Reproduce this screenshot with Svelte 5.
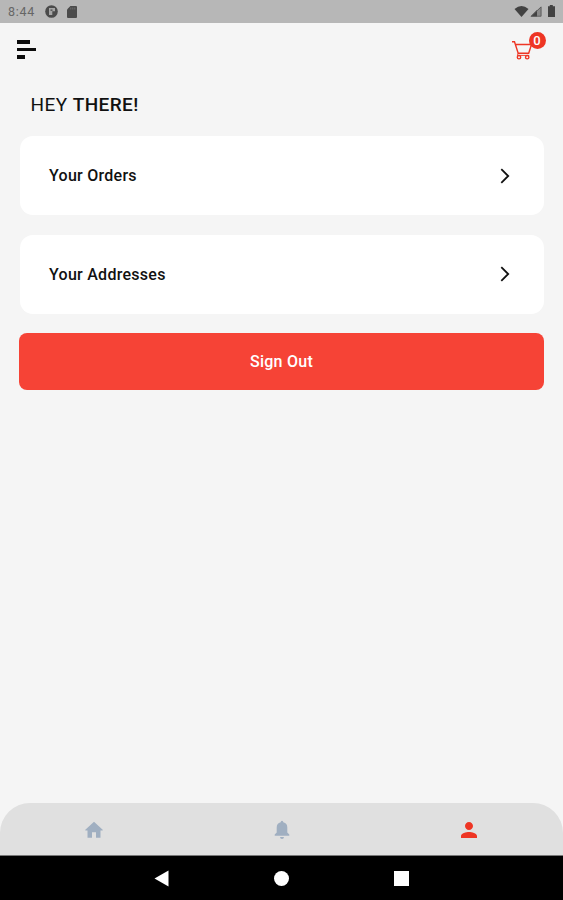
<script>
  const links = ['Your Orders', 'Your Addresses'];
</script>

<div class="screen">
  <div class="status">
    <span class="time">8:44</span>
    <svg class="disc" width="13" height="13" viewBox="0 0 13 13"><circle cx="6.5" cy="6.5" r="6.3" fill="#4b4b4b" /><path d="M4 3h6v3.200H7.300V10H4z" fill="#a5a5a5" /><path d="M5.500 4.500h2v1.300h-2z" fill="#4b4b4b" /></svg>
    <svg class="card-icon" width="10" height="12" viewBox="0 0 10 12"><path d="M3.4 0H9q1 0 1 1v10q0 1-1 1H1q-1 0-1-1V3.5z" fill="#4b4b4b" /><path d="M3.8 1.500v2M5.800 1.500v2M7.800 1.500v2" stroke="#777" stroke-width=".8" /></svg>
    <span class="space"></span>
    <svg width="42" height="13" viewBox="0 0 42 13">
      <path d="M.5 4Q7.500-2.200 14.500 4L7.500 12z" fill="#424242" />
      <path d="M16.500 11.500L27.500 1v10.500z" fill="#8a8a8a" /><path d="M16.500 11.500L23 5v6.500z" fill="#424242" /><path d="M17.500 11.200L27 2v9.200z" fill="none" stroke="#555" stroke-width=".8" />
      <path d="M35.800 0h3v1.300H41V12h-7V1.300h1.800z" fill="#424242" />
    </svg>
  </div>

  <header>
    <div class="menu"><i></i><i></i><i></i></div>
    <div class="cart">
      <svg width="21" height="20" viewBox="0 0 21 20" fill="none" stroke="#ee3524" stroke-width="1.400">
        <path d="M0 1.700h2.500L6.200 13.200h10.500L19.500 4.500H4" />
        <path d="M6.200 13.200l-.8 2.200h11.800" stroke-width=".9" />
        <circle cx="7" cy="17.200" r="1.700" /><circle cx="15.200" cy="17.200" r="1.700" />
      </svg>
      <span class="badge">0</span>
    </div>
  </header>

  <main>
    <h1>HEY <b>THERE!</b></h1>
    {#each links as label}
      <div class="row">
        <span>{label}</span>
        <svg width="10" height="16" viewBox="0 0 10 16"><path d="M1.300 1.200L8.200 8l-6.900 6.800" fill="none" stroke="#111" stroke-width="1.800" /></svg>
      </div>
    {/each}
    <button>Sign Out</button>
  </main>

  <nav>
    <div class="tab"><svg width="18" height="18" viewBox="0 0 18 18" fill="#a0afc1"><path d="M9 .8L17.700 8.800V9.500H15.500v7.300H11V11.300H7v5.500H2.500V9.500H.3v-.7z" /></svg></div>
    <div class="tab"><svg width="16" height="20" viewBox="0 0 16 20" fill="#a0afc1"><path d="M8 .8q1.300 0 1.300 1.500Q13.300 3.300 13.300 7.500v5l2 2v1.200H.7v-1.200l2-2v-5Q2.700 3.300 6.700 2.300 6.700.8 8 .8zM6 17h4q-.2 2-2 2t-2-2z" /></svg></div>
    <div class="tab"><svg width="24" height="24" viewBox="0 0 24 24" fill="#ee3524"><path d="M12 12c2.210 0 4-1.790 4-4s-1.790-4-4-4-4 1.790-4 4 1.790 4 4 4zm0 2c-2.670 0-8 1.340-8 4v2h16v-2c0-2.660-5.330-4-8-4z" /></svg></div>
  </nav>
  <footer>
    <svg width="15" height="17" viewBox="0 0 15 17"><path d="M14.500 .5v16L.5 8.500z" fill="#fff" /></svg>
    <i class="circle"></i>
    <i class="square"></i>
  </footer>
</div>

<style>
  .screen { width: 563px; height: 900px; display: flex; flex-direction: column; background: #f5f5f5; font-family: Roboto, sans-serif; color: #111; overflow: hidden; }
  .status { height: 23px; flex: none; box-sizing: border-box; display: flex; align-items: center; padding: 0 7px 0 8px; background: #b7b7b7; }
  .time { font-size: 12.500px; line-height: 24px; color: #666; width: 37px; letter-spacing: .7px; padding-top: 1px; }
  .card-icon { margin-left: 9px; }
  .space { flex: 1; }
  header { height: 53px; flex: none; display: flex; justify-content: space-between; padding: 0 31px 0 17px; }
  .menu { display: flex; flex-direction: column; gap: 4px; padding-top: 17px; }
  .menu i { height: 3.500px; width: 13px; background: #0b0b0b; }
  .menu i:nth-child(2) { width: 19px; }
  .menu i:nth-child(3) { width: 8px; }
  .cart { position: relative; width: 20px; padding-top: 17px; }
  .badge { position: absolute; left: 16.500px; top: 9px; width: 17px; height: 17px; border-radius: 50%; background: #ee3524; color: #fff; font-size: 13px; font-weight: 500; line-height: 17px; text-align: center; }
  main { flex: 1; padding: 0 19px; display: flex; flex-direction: column; }
  h1 { margin: 15px 0 18px 11.500px; font-size: 19px; line-height: 27px; height: 27px; font-weight: 400; letter-spacing: .42px; }
  b { font-weight: 500; }
  .row { height: 79px; flex: none; box-sizing: border-box; margin: 0 0 19.500px 1px; padding: 0 34px 0 29px; display: flex; align-items: center; justify-content: space-between; background: #fff; border-radius: 13px; font-size: 16px; font-weight: 500; letter-spacing: .27px; }
  button { height: 57px; padding: 0; border: 0; border-radius: 8px; background: #f64336; color: #fff; font: 500 16px Roboto, sans-serif; letter-spacing: .27px; }
  nav { height: 52px; flex: none; box-sizing: border-box; padding-top: 1px; display: flex; align-items: center; background: #e0e0e0; border-radius: 30px 30px 0 0; }
  .tab { flex: 1; display: flex; justify-content: center; }
  footer { height: 45px; flex: none; box-sizing: border-box; border-top: 1px solid #777; display: flex; align-items: center; justify-content: center; gap: 105px; background: #000; }
  .circle { width: 15px; height: 15px; border-radius: 50%; background: #fff; }
  .square { width: 15px; height: 15px; background: #fff; }
</style>
